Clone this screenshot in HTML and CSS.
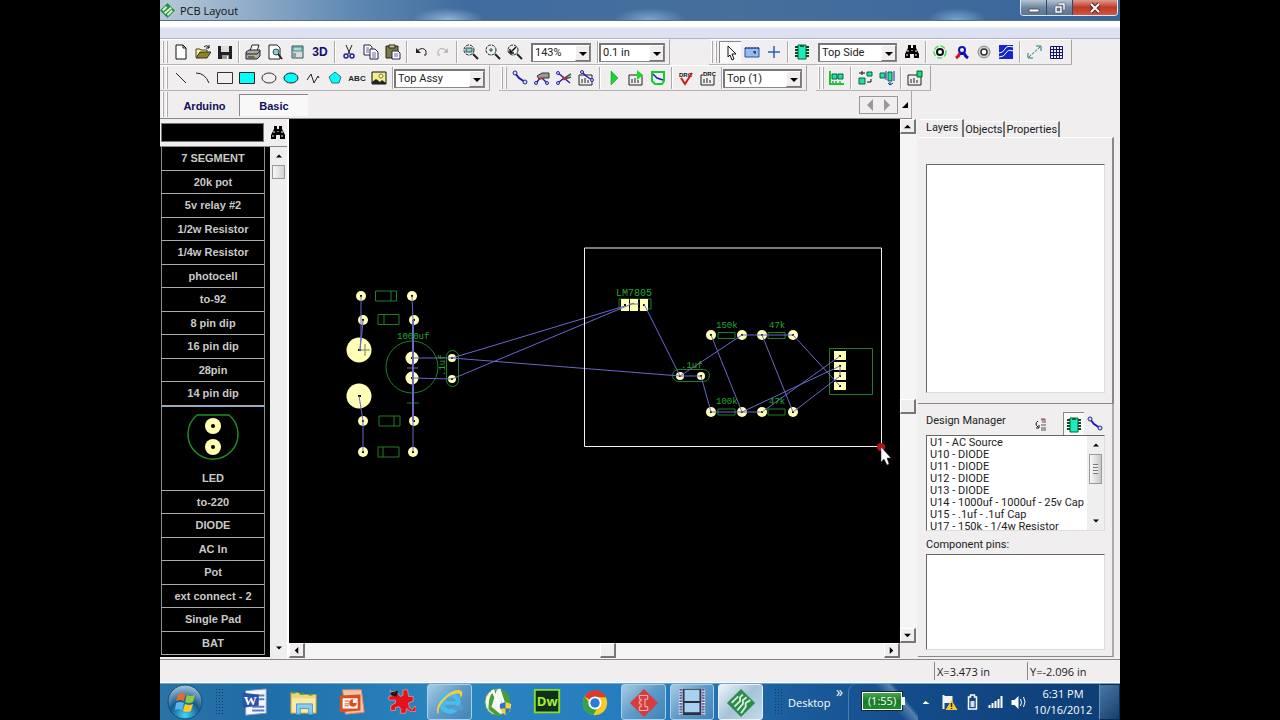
FILE: index.html
```html
<!DOCTYPE html>
<html lang="en">
<head>
  <meta charset="UTF-8">
  <title>PCB Layout</title>
  <meta name="viewport" content="width=device-width, initial-scale=1">
  <link rel="stylesheet" href="styles.css">
</head>
<body>
  <!-- shared shapes -->
  <svg class="defs" width="0" height="0" aria-hidden="true">
    <defs>
      <symbol id="binoculars" viewBox="0 0 16 16"><path d="M4 1h3v3h2V1h3v3l3 6v4h-5v-4H6v4H1v-4l3-6z" fill="#000"/><path d="M4 6v2M12 6v2M3 10v2M12 10v2M8 6v1" stroke="#fff"/></symbol>
      <symbol id="chip" viewBox="0 0 16 16"><path d="M4 1h8v14H4z" fill="#20e8c0" stroke="#063"/><path d="M1 3h3M1 6h3M1 9h3M1 12h3M12 3h3M12 6h3M12 9h3M12 12h3" stroke="#0a4a18" stroke-width="2"/><path d="M6 1h4v2H6z" fill="#063"/></symbol>
      <symbol id="trace" viewBox="0 0 16 16"><path d="M3 3l4 5 6 4" fill="none" stroke="#1a1ab8" stroke-width="2"/><circle cx="3" cy="3" r="2" fill="#dde" stroke="#22a"/><circle cx="13" cy="12" r="2" fill="#dde" stroke="#22a"/></symbol>
      <symbol id="lens" viewBox="0 0 16 16"><circle cx="6" cy="6" r="5" fill="#e8f2f2" stroke="#222" stroke-dasharray="3 1"/><path d="M10 10l5 5" stroke="#222" stroke-width="2"/></symbol>
      <symbol id="report" viewBox="0 0 16 16"><path d="M1 5h13v10H1z" fill="#eee" stroke="#222"/><path d="M4 13V9M7 13V8M10 13v-3" stroke="#888" stroke-width="2"/></symbol>
      <symbol id="down" viewBox="0 0 8 8"><path d="M0 2h8L4 6z" fill="#000"/></symbol>
      <symbol id="up" viewBox="0 0 8 8"><path d="M0 6h8L4 2z" fill="#000"/></symbol>
      <symbol id="left" viewBox="0 0 8 8"><path d="M6 0v8L2 4z" fill="#000"/></symbol>
      <symbol id="right" viewBox="0 0 8 8"><path d="M2 0v8l4-4z" fill="#000"/></symbol>
    </defs>
  </svg>

  <div class="desktop">
    <header class="titlebar">
      <svg class="app-icon" viewBox="0 0 16 16"><path d="M8 0l8 8-8 8-8-8z" fill="#2c9148"/><path d="M3 8l4-4M5 11l7-6M8 13l5-5" stroke="#d5f3da" stroke-width="2"/></svg>
      <span class="title">PCB Layout</span>
      <div class="window-buttons">
        <button class="min" aria-label="Minimize"><svg viewBox="0 0 12 12"><path d="M1 7h10v3H1z" fill="#fff" stroke="#556"/></svg></button>
        <button class="restore" aria-label="Restore"><svg viewBox="0 0 12 12"><path d="M4 1h7v7H9V3H4zM1 4h7v7H1zM3 6v3h3V6z" fill="#fff" fill-rule="evenodd" stroke="#445" stroke-width=".5"/></svg></button>
        <button class="close" aria-label="Close"><svg viewBox="0 0 12 12"><path d="M2 2l8 8M10 2l-8 8" stroke="#522" stroke-width="4"/><path d="M2 2l8 8M10 2l-8 8" stroke="#fff" stroke-width="2"/></svg></button>
      </div>
    </header>
    <div class="menubar"></div>

    <div class="toolbar-row wide">
      <div class="toolbar">
        <span class="grip"></span>
        <button aria-label="New"><svg viewBox="0 0 16 16"><path d="M3 1h7l3 3v11H3z" fill="#fff" stroke="#111"/><path d="M10 1v3h3" fill="none" stroke="#111"/></svg></button>
        <button aria-label="Open"><svg viewBox="0 0 16 16"><path d="M1 13V5h4l1 1h6v3" fill="#f4ee9a" stroke="#442"/><path d="M1 14l4-6h11l-4 6z" fill="#8b8420" stroke="#332"/><path d="M9 3q3-3 5 1M14 1v3h-3" fill="none" stroke="#111"/></svg></button>
        <button aria-label="Save"><svg viewBox="0 0 16 16"><path d="M1 2h14v13H1z" fill="#222"/><path d="M4 2h8v6H4z" fill="#ddd"/><path d="M5 11h7v4H5z" fill="#999"/><path d="M10 12h1v3h-1z" fill="#fff"/></svg></button>
        <span class="sep"></span>
        <button aria-label="Print"><svg viewBox="0 0 16 16"><path d="M5 7l2-6h7l-2 6z" fill="#fff" stroke="#222"/><path d="M1 8l3-2h11v6l-3 3H1z" fill="#aaa" stroke="#222"/><path d="M1 10h11l3-3M3 13h7" fill="none" stroke="#222"/><path d="M9 12h2" stroke="#dd0"/></svg></button>
        <button aria-label="Print preview"><svg viewBox="0 0 16 16"><path d="M2 1h8l3 3v11H2z" fill="#fff" stroke="#222"/><circle cx="9" cy="8" r="3" fill="#8cc" stroke="#355"/><path d="M11 10l4 5" stroke="#222" stroke-width="2"/></svg></button>
        <button aria-label="Calculator"><svg viewBox="0 0 16 16"><path d="M3 2h11v12H3z" fill="#ddd" stroke="#255"/><path d="M4 3h9v4H4z" fill="#a8dadb" stroke="#488"/><path d="M4 10h3M4 12h3" stroke="#366"/></svg></button>
        <button class="three-d">3D</button>
        <span class="sep"></span>
        <button aria-label="Cut"><svg viewBox="0 0 16 16"><path d="M5 1l4 9M11 1l-4 9" stroke="#222"/><circle cx="5" cy="12" r="2" fill="none" stroke="#228" stroke-width="1.5"/><circle cx="11" cy="12" r="2" fill="none" stroke="#228" stroke-width="1.5"/></svg></button>
        <button aria-label="Copy"><svg viewBox="0 0 16 16"><path d="M1 1h6l2 2v8H1z" fill="#fff" stroke="#224"/><path d="M7 5h5l3 3v7H7z" fill="#fff" stroke="#224"/><path d="M3 4h3M3 6h3M3 8h3M9 9h4M9 11h4M9 13h4" stroke="#669"/></svg></button>
        <button aria-label="Paste"><svg viewBox="0 0 16 16"><path d="M1 2h12v12H1z" fill="#7b7b3c" stroke="#222"/><path d="M4 1h6v3H4z" fill="#cc9" stroke="#222"/><path d="M7 7h6l2 2v6H7z" fill="#fff" stroke="#226"/><path d="M9 10h4M9 12h4" stroke="#669"/></svg></button>
        <span class="sep"></span>
        <button aria-label="Undo"><svg viewBox="0 0 16 16"><path d="M3 4v5h5z" fill="#222"/><path d="M4 7q6-5 9 0v4h-2" fill="none" stroke="#222"/></svg></button>
        <button aria-label="Redo" disabled><svg viewBox="0 0 16 16"><path d="M13 4v5H8z" fill="#bbb"/><path d="M12 7Q6 2 3 7v4h2" fill="none" stroke="#aaa"/></svg></button>
        <span class="sep"></span>
        <button aria-label="Zoom window"><svg viewBox="0 0 16 16"><use href="#lens"/><path d="M3 4h6v4H3z" fill="#9cc" stroke="#255"/></svg></button>
        <button aria-label="Zoom in"><svg viewBox="0 0 16 16"><use href="#lens"/><path d="M4 6h4M6 4v4" stroke="#444"/></svg></button>
        <button aria-label="Zoom previous"><svg viewBox="0 0 16 16"><use href="#lens"/><path d="M3 5v4h4M4 8l5-5" fill="none" stroke="#111" stroke-width="1.5"/></svg></button>
        <span class="combo zoom"><select aria-label="Zoom"><option>143%</option></select><i><svg viewBox="0 0 8 8"><use href="#down"/></svg></i></span>
        <span class="sep"></span>
        <span class="combo unit"><select aria-label="Grid"><option>0.1 in</option></select><i><svg viewBox="0 0 8 8"><use href="#down"/></svg></i></span>
      </div>
      <div class="toolbar">
        <span class="grip"></span>
        <button class="pressed" aria-label="Select"><svg viewBox="0 0 16 16"><path d="M5 1l8 8H9l2 5-2 1-2-5-2 2z" fill="#fff" stroke="#111"/></svg></button>
        <button aria-label="Board"><svg viewBox="0 0 16 16"><path d="M1 4h14v9H1z" fill="#91bdf5" stroke="#2c4f9c"/><path d="M1 4h14" stroke="#124" stroke-dasharray="2 1"/><path d="M9 8h3M11 7v3" stroke="#124"/></svg></button>
        <button aria-label="Origin"><svg viewBox="0 0 16 16"><path d="M2 8h12M8 2v12" stroke="#2b5fb8" stroke-width="1.5"/></svg></button>
        <span class="sep"></span>
        <button aria-label="Component"><svg viewBox="0 0 16 16"><use href="#chip"/></svg></button>
        <span class="combo side"><select aria-label="Side"><option>Top Side</option></select><i><svg viewBox="0 0 8 8"><use href="#down"/></svg></i></span>
        <button aria-label="Find"><svg viewBox="0 0 16 16"><use href="#binoculars"/></svg></button>
        <span class="sep"></span>
        <button aria-label="Pad"><svg viewBox="0 0 16 16"><circle cx="8" cy="8" r="6" fill="none" stroke="#4ddc5a" stroke-width="1.5" stroke-dasharray="5 2"/><circle cx="8" cy="8" r="3" fill="#fff" stroke="#111" stroke-width="2"/></svg></button>
        <button aria-label="Route"><svg viewBox="0 0 16 16"><circle cx="8" cy="6" r="3" fill="#eee" stroke="#11b" stroke-width="2"/><path d="M6 9q-1 3-4 5" fill="none" stroke="#d11" stroke-width="3"/><path d="M10 9q1 3 4 5" fill="none" stroke="#11b" stroke-width="3"/><path d="M6 10h5" stroke="#11b" stroke-width="2"/></svg></button>
        <button aria-label="Via"><svg viewBox="0 0 16 16"><circle cx="8" cy="8" r="6" fill="#ccc" stroke="#888"/><circle cx="8" cy="8" r="3" fill="#fff" stroke="#333" stroke-width="1.5"/></svg></button>
        <button aria-label="Copper pour"><svg viewBox="0 0 16 16"><path d="M1 1h14v14H1z" fill="#1425cc"/><path d="M1 9q4 0 6-4t8-2M1 13q5 0 7-4t7-2" fill="none" stroke="#fff"/></svg></button>
        <span class="sep"></span>
        <button aria-label="Measure"><svg viewBox="0 0 16 16"><path d="M3 13L14 3" stroke="#277" stroke-dasharray="3 1"/><path d="M2 9v5h5M10 2h5v5" fill="none" stroke="#277"/></svg></button>
        <button aria-label="Grid"><svg viewBox="0 0 16 16"><path d="M2.500 2.500h12v12h-12zM5.500 2v12M8.500 2v12M11.500 2v12M2 5.500h12M2 8.500h12M2 11.500h12" fill="none" stroke="#15156e"/></svg></button>
      </div>
    </div>

    <div class="toolbar-row">
      <div class="toolbar">
        <span class="grip"></span>
        <button aria-label="Line"><svg viewBox="0 0 16 16"><path d="M3 3l10 10" stroke="#222"/></svg></button>
        <button aria-label="Arc"><svg viewBox="0 0 16 16"><path d="M1 3q9 0 13 10" fill="none" stroke="#222"/></svg></button>
        <button aria-label="Rectangle"><svg viewBox="0 0 16 16"><path d="M.5 2.500h15v11H.5z" fill="none" stroke="#333"/></svg></button>
        <button aria-label="Filled rectangle"><svg viewBox="0 0 16 16"><path d="M.5 2.500h15v11H.5z" fill="#0ff" stroke="#222"/></svg></button>
        <button aria-label="Ellipse"><svg viewBox="0 0 16 16"><ellipse cx="8" cy="8" rx="7" ry="5" fill="none" stroke="#333"/></svg></button>
        <button aria-label="Filled ellipse"><svg viewBox="0 0 16 16"><ellipse cx="8" cy="8" rx="7" ry="5" fill="#0ff" stroke="#222"/></svg></button>
        <button aria-label="Polyline"><svg viewBox="0 0 16 16"><path d="M2 10l4-6 3 9 4-7 1 2" fill="none" stroke="#222"/></svg></button>
        <button aria-label="Polygon"><svg viewBox="0 0 16 16"><path d="M8 2l6 5-2 6H5L2 7z" fill="#0ff" stroke="#377"/></svg></button>
        <button class="abc">ABC</button>
        <button aria-label="Image"><svg viewBox="0 0 16 16"><path d="M1 2h14v12H1z" fill="#f3f08a" stroke="#111"/><path d="M1 14v-2l4-3 4 3 2-2 4 3v1z" fill="#222"/><circle cx="10" cy="6" r="2" fill="#fff" stroke="#772"/></svg></button>
        <span class="sep"></span>
        <span class="combo layer"><select aria-label="Drawing layer"><option>Top Assy</option></select><i><svg viewBox="0 0 8 8"><use href="#down"/></svg></i></span>
      </div>
      <div class="toolbar">
        <span class="grip"></span>
        <button aria-label="Manual route"><svg viewBox="0 0 16 16"><use href="#trace"/></svg></button>
        <button aria-label="Edit trace"><svg viewBox="0 0 16 16"><path d="M2 13l5-6 6 6" fill="none" stroke="#22a" stroke-width="1.5"/><circle cx="2" cy="13" r="1.5" fill="#dde" stroke="#22a"/><circle cx="13" cy="13" r="1.5" fill="#dde" stroke="#22a"/><path d="M3 6l5-3h7v5H9L5 9z" fill="#999" stroke="#333"/><path d="M5 9l3-1" stroke="#d22" stroke-width="2"/></svg></button>
        <button aria-label="Unroute"><svg viewBox="0 0 16 16"><path d="M2 3l5 4 7 6M2 13l6-5" fill="none" stroke="#22a" stroke-width="1.5"/><circle cx="2" cy="3" r="1.5" fill="#dde" stroke="#22a"/><circle cx="2" cy="13" r="1.5" fill="#dde" stroke="#22a"/><path d="M7 9l8-5M9 9l6-2" stroke="#555" stroke-width="1.5"/><path d="M7 7l2 3" stroke="#d22" stroke-width="2"/></svg></button>
        <button aria-label="Route setup"><svg viewBox="0 0 16 16"><use href="#report"/><path d="M4 2l4 4 6 4" fill="none" stroke="#22a" stroke-width="1.5"/><circle cx="4" cy="2" r="1.5" fill="#dde" stroke="#22a"/><circle cx="14" cy="10" r="1.5" fill="#dde" stroke="#22a"/></svg></button>
        <span class="sep"></span>
        <button aria-label="Run autorouter"><svg viewBox="0 0 16 16"><path d="M5 1l7 7-7 7z" fill="#14d62c" stroke="#197a2a" stroke-width=".5"/></svg></button>
        <button aria-label="Autorouter setup"><svg viewBox="0 0 16 16"><use href="#report"/><path d="M9 0l6 5-6 5z" fill="#12dd20"/></svg></button>
        <button aria-label="Route net"><svg viewBox="0 0 16 16"><path d="M2 2h12v9l-2 3H5l-3-3z" fill="#eef" stroke="#18cc28" stroke-width="2"/><path d="M3 4l4 4 6 2" stroke="#22a" stroke-width="1.5" fill="none"/></svg></button>
        <span class="sep"></span>
        <button aria-label="Design rule check"><svg viewBox="0 0 16 16"><text class="tiny" x="1" y="7">DRC</text><path d="M3 8l4 6 7-11" fill="none" stroke="#d01818" stroke-width="2"/></svg></button>
        <button aria-label="Rule setup"><svg viewBox="0 0 16 16"><use href="#report"/><path d="M3 1h13v5H3z" fill="#eee"/><text class="tiny" x="3" y="6">DRC</text></svg></button>
        <span class="sep"></span>
        <span class="combo side"><select aria-label="Routing layer"><option>Top (1)</option></select><i><svg viewBox="0 0 8 8"><use href="#down"/></svg></i></span>
      </div>
      <div class="toolbar">
        <span class="grip"></span>
        <button aria-label="Arrange"><svg viewBox="0 0 16 16"><path d="M1 1v13h14" fill="none" stroke="#1ac82a" stroke-width="2"/><path d="M3 4h5v5H3zM9 4h5v5H9z" fill="#2ddb9d" stroke="#064"/><path d="M4 11v2M7 11v2M11 11v2" stroke="#064"/></svg></button>
        <span class="sep"></span>
        <button aria-label="Auto placement"><svg viewBox="0 0 16 16"><path d="M10 2h5v4h-5zM2 8h6v6H2z" fill="#2ddb9d" stroke="#064"/><path d="M2 3h6M5 1v4M14 9v3h-4" fill="none" stroke="#111"/></svg></button>
        <button aria-label="Update placement"><svg viewBox="0 0 16 16"><path d="M1 3h5v5H1zM9 2h4v9H9z" fill="#2ddb9d" stroke="#064"/><path d="M7 1v9M15 1v10M11 12v3M9 13l2 2 3-2" fill="none" stroke="#22a"/></svg></button>
        <span class="sep"></span>
        <button aria-label="Placement setup"><svg viewBox="0 0 16 16"><use href="#report"/><path d="M10 1h5v6h-5z" fill="#24d778" stroke="#063"/></svg></button>
      </div>
    </div>

    <nav class="library-tabs">
      <span class="grip"></span>
      <button>Arduino</button>
      <button class="active">Basic</button>
      <span class="nav-arrows">
        <button aria-label="Previous" disabled><svg viewBox="0 0 8 12"><path d="M7 0v12L1 6z" fill="#999"/></svg></button>
        <button aria-label="Next" disabled><svg viewBox="0 0 8 12"><path d="M1 0v12l6-6z" fill="#999"/></svg></button>
      </span>
      <svg class="corner" viewBox="0 0 6 6"><path d="M6 0v6H0z" fill="#000"/></svg>
    </nav>

    <main class="workspace">
      <aside class="library">
        <div class="search">
          <input type="text" aria-label="Search components">
          <button aria-label="Find component"><svg viewBox="0 0 16 16"><use href="#binoculars"/></svg></button>
        </div>
        <div class="library-body">
          <div class="parts">
            <button>7 SEGMENT</button>
            <button>20k pot</button>
            <button>5v relay #2</button>
            <button>1/2w Resistor</button>
            <button>1/4w Resistor</button>
            <button>photocell</button>
            <button>to-92</button>
            <button>8 pin dip</button>
            <button>16 pin dip</button>
            <button>28pin</button>
            <button>14 pin dip</button>
            <button class="selected">
              <svg viewBox="0 0 54 50"><path d="M11 3h32A25 25 0 1 1 11 3z" fill="none" stroke="#1c8f22" stroke-width="1.5"/><g fill="#ffffb0"><circle cx="27" cy="14" r="8"/><circle cx="27" cy="35" r="8"/></g><circle cx="27" cy="14" r="2"/><circle cx="27" cy="35" r="2"/></svg>
              LED
            </button>
            <button>to-220</button>
            <button>DIODE</button>
            <button>AC In</button>
            <button>Pot</button>
            <button>ext connect - 2</button>
            <button>Single Pad</button>
            <button>BAT</button>
          </div>
          <div class="slim-scroll">
            <svg viewBox="0 0 8 8"><use href="#up"/></svg>
            <span class="thumb"></span>
            <svg class="end" viewBox="0 0 8 8"><use href="#down"/></svg>
          </div>
        </div>
      </aside>

      <section class="board">
        <div class="board-top">
          <svg class="pcb" viewBox="289 119 611 524" role="img" aria-label="Circuit board">
            <g class="outline">
              <path d="M375.500 291h21v10h-21zM391 291v10M378 314.500h21v10h-21zM384 314.500v10M379 416h21v10h-21zM394 416v10M378 447h21v10h-21zM383 447v10"/>
              <circle cx="412" cy="367" r="26"/>
              <rect x="446.500" y="350.500" width="12" height="36" rx="6"/>
              <path d="M407 403h12M413 398v11M619 299h32v10h-32z"/>
              <rect x="672.500" y="369.500" width="37" height="12" rx="6"/>
              <path d="M718 332.500h17v6h-17zM768 332.500h17v6h-17zM718 409h17v6h-17zM768 409h17v6h-17zM829.500 348.500h43v46h-43z"/>
            </g>
            <g class="pads">
              <circle cx="361" cy="296" r="5"/><circle cx="412" cy="296" r="5"/>
              <circle cx="363" cy="320" r="5"/><circle cx="414" cy="320" r="5"/>
              <circle cx="359" cy="350" r="12.500"/><circle cx="359" cy="396" r="12.500"/>
              <circle cx="412" cy="358" r="6.500"/><circle cx="412" cy="378" r="6.500"/>
              <circle cx="452" cy="358" r="4"/><circle cx="452" cy="379" r="4"/>
              <circle cx="363" cy="421" r="5"/><circle cx="414" cy="421" r="5"/>
              <circle cx="363" cy="452" r="5"/><circle cx="413" cy="452" r="5"/>
              <path d="M621 299h8v12h-8zM630 299h8v12h-8zM640 299h8v12h-8z"/>
              <circle cx="680" cy="376" r="4"/><circle cx="701" cy="376" r="4"/>
              <circle cx="711" cy="335" r="5"/><circle cx="742" cy="335" r="5"/><circle cx="762" cy="335" r="5"/><circle cx="793" cy="335" r="5"/>
              <circle cx="711" cy="412" r="5"/><circle cx="742" cy="412" r="5"/><circle cx="762" cy="412" r="5"/><circle cx="793" cy="412" r="5"/>
              <path d="M834 351h12v9h-12zM834 362h12v8h-12zM834 372h12v8h-12zM834 382h12v8h-12z"/>
            </g>
            <!-- drill holes -->
            <path class="holes" d="M360 296h2M411 296h2M362 320h2M413 320h2M358 350h3M358 396h3M411 358h3M411 378h3M451 358h2M451 379h2M362 421h2M413 421h2M362 452h2M412 452h2M624 305h2M643 305h2M679 376h2M700 376h2M710 335h2M741 335h2M761 335h2M792 335h2M710 412h2M741 412h2M761 412h2M792 412h2M839 356h2M839 366h2M839 376h2M839 386h2"/>
            <path class="marks" d="M359 350h11M365 344v12M407 368h11M629 304h10"/>
            <g class="nets">
              <path d="M361 296v38l-1 16M363 320l-1 12-2 18M412 296l1 24v132M412 358h40M412 378l40 1M452 358l173-52M452 379l182-76M452 358l228 18M359 396l4 25v31"/>
              <path d="M644 304l36 72 62-41M680 376h21l10 36h51M742 335h51l47 51M711 335l31 77 98-46M762 335l31 77 47-36v-10M762 412l78-56"/>
              <path class="thick" d="M413 320v101"/>
            </g>
            <g class="labels">
              <text x="397" y="339">1000uf</text>
              <text x="445" y="376" transform="rotate(-90 445 376)">.1uf</text>
              <text class="big" x="616" y="296">LM7805</text>
              <text x="716" y="328">150k</text>
              <text x="769" y="328">47k</text>
              <text x="681" y="368">.1uf</text>
              <text x="716" y="404">100k</text>
              <text x="769" y="404">47k</text>
            </g>
            <path class="board-edge" d="M584.500 248h297v198.500h-297z"/>
            <circle cx="881" cy="447" r="4" fill="#b3141c"/>
            <path d="M881 447v15l3-3 3 6 2-1-2-6h4z" fill="#fff" stroke="#333" stroke-width=".5"/>
          </svg>
          <div class="scroll vertical">
            <span class="box"><svg viewBox="0 0 8 8"><use href="#up"/></svg></span>
            <span class="box middle"></span>
            <span class="box"><svg viewBox="0 0 8 8"><use href="#down"/></svg></span>
          </div>
        </div>
        <div class="scroll horizontal">
          <span class="box"><svg viewBox="0 0 8 8"><use href="#left"/></svg></span>
          <span class="box middle"></span>
          <span class="box"><svg viewBox="0 0 8 8"><use href="#right"/></svg></span>
        </div>
      </section>

      <aside class="inspector">
        <div class="tabs">
          <button class="active">Layers</button>
          <button>Objects</button>
          <button>Properties</button>
        </div>
        <div class="layers"><div class="well"></div></div>
        <div class="manager">
          <div class="manager-head">
            <span>Design Manager</span>
            <button aria-label="Sort"><svg viewBox="0 0 16 16"><path d="M8 3h4M9 6h4M8 9h5M8 12h5M8 14h5" stroke="#555"/><path d="M5 5q-4 3 0 6M3 12h3V9" fill="none" stroke="#111"/><path d="M8 4h5" stroke="#b33"/></svg></button>
            <button class="pressed" aria-label="Components"><svg viewBox="0 0 16 16"><use href="#chip"/></svg></button>
            <button aria-label="Nets"><svg viewBox="0 0 16 16"><use href="#trace"/></svg></button>
          </div>
          <div class="component-box">
            <ul>
              <li>U1 - AC Source</li>
              <li>U10 - DIODE</li>
              <li>U11 - DIODE</li>
              <li>U12 - DIODE</li>
              <li>U13 - DIODE</li>
              <li>U14 - 1000uf - 1000uf - 25v Cap</li>
              <li>U15 - .1uf - .1uf Cap</li>
              <li>U17 - 150k - 1/4w Resistor</li>
            </ul>
            <div class="slim-scroll">
              <svg viewBox="0 0 8 8"><use href="#up"/></svg>
              <span class="thumb tall"></span>
              <svg class="end" viewBox="0 0 8 8"><use href="#down"/></svg>
            </div>
          </div>
          <div class="pins-label">Component pins:</div>
          <div class="well pins"></div>
        </div>
      </aside>
    </main>

    <footer class="status">
      <span>X=3.473 in</span>
      <span>Y=-2.096 in</span>
    </footer>

    <div class="taskbar">
      <button class="start" aria-label="Start">
        <svg viewBox="0 0 36 36">
          <defs><radialGradient id="orb" cx=".5" cy=".9" r=".9"><stop offset="0" stop-color="#46d3f4"/><stop offset=".5" stop-color="#155a92"/><stop offset="1" stop-color="#a9c9dc"/></radialGradient></defs>
          <circle cx="18" cy="18" r="17" fill="url(#orb)" stroke="#174b6e"/>
          <path d="M11 11q4-3 7-1l-1 7q-4-2-8 0z" fill="#ee6a24"/><path d="M20 11q3 2 8 0l-2 7q-4 2-8 0z" fill="#8fca3c"/><path d="M9 19q4-2 8 0l-2 7q-3-2-7 0z" fill="#58b7ee"/><path d="M18 20q4 2 8 0l-2 7q-4 2-8 0z" fill="#fcc928"/>
        </svg>
      </button>
      <span class="dots"></span>
      <div class="tasks">
        <button aria-label="Word"><svg viewBox="0 0 32 32"><path d="M6 4l22-2v26l-22 2z" fill="#f4f7fc" stroke="#7a95c5"/><path d="M18 9h8M18 13h8M13 21h13M13 25h13" stroke="#5d7fc0" stroke-width="2"/><path d="M3 6l17 2v12l-17 2z" fill="#2a53a6"/><text class="logo" x="4" y="19">W</text></svg></button>
        <button aria-label="Explorer"><svg viewBox="0 0 32 32"><path d="M2 6h8l2 2h17v20H2z" fill="#ecd67c" stroke="#b99b3e"/><path d="M3 12h25v15H3z" fill="#f8e9a6"/><path d="M3 6h4M12 7h4M21 8h4" stroke="#3a9b4a" stroke-width="2"/><path d="M8 29V18h17v11h-4v-6h-9v6z" fill="#8ccbea" stroke="#4a9bc8"/></svg></button>
        <button aria-label="PowerPoint"><svg viewBox="0 0 32 32"><path d="M6 3h20l3 24-20 2z" fill="#f6c2a6" stroke="#d98a68"/><path d="M3 9l22-1v17l-22 2z" fill="#d9501e"/><path d="M6 12h16v11H6z" fill="#fff"/><path d="M8 15h5M8 18h5M8 20h5" stroke="#d9501e"/><circle cx="17" cy="17" r="4" fill="#d9501e"/><path d="M17 17v-4a4 4 0 0 1 4 4z" fill="#fff"/></svg></button>
        <button aria-label="IrfanView"><svg viewBox="0 0 32 32"><path d="M4 4l8 2 3 4 3-1V3h5l1 7h5v5l-5 2 1 5 3 2 2-3h2v5h-6l-4-3-1 5h-6l1-4-2-3-4 1v3H5v-5l5-3V14H3v-4l5-1z" fill="#e3131b" stroke="#f3a9ac" stroke-width=".7"/><path d="M5 6l8-2-2 6-5-1z" fill="#111"/><path d="M8 7l2-1" stroke="#e3131b"/></svg></button>
        <button class="open" aria-label="Internet Explorer"><svg viewBox="0 0 32 32"><circle cx="17" cy="17" r="9" fill="none" stroke="#45bdf0" stroke-width="5"/><path d="M11 17h15" stroke="#45bdf0" stroke-width="4"/><path d="M21 20h10v5h-10z" fill="#5f9ac6"/><path d="M4 29Q0 21 11 11T29 4q3 3-1 8 1-6-4-5-6 0-13 7T5 28z" fill="#f5cf3a"/></svg></button>
        <button aria-label="CorelDRAW"><svg viewBox="0 0 32 32"><ellipse cx="15" cy="16" rx="13" ry="14" fill="#f2f7ee" stroke="#598f45"/><path d="M15 2q-10 4-9 22 8 8 14 6L9 21zM17 2q12 2 12 16l-9-1z" fill="#4a9e36"/><path d="M10 3l8 17M17 2l5 15" stroke="#fff" stroke-width="3"/><path d="M18 18l6-2 6 2q0 9-6 12-6-3-6-12z" fill="#f4cf43"/><path d="M18 18l6-2v7h-6zM24 23h5q-1 5-5 7z" fill="#2a73c8"/></svg></button>
        <button aria-label="Dreamweaver"><svg viewBox="0 0 32 32"><path d="M3 3h26v24H3z" fill="#10301a" stroke="#8be01c" stroke-width="2"/><text class="dw" x="5" y="20">Dw</text></svg></button>
        <button aria-label="Chrome"><svg viewBox="0 0 32 32"><circle cx="16" cy="17" r="13" fill="#f5c927"/><path d="M16 17L5 10a13 13 0 0 1 23 1H16z" fill="#dc3a2c"/><path d="M5 10a13 13 0 0 0 9 20l6-10-9-1z" fill="#38a048"/><circle cx="16" cy="17" r="7" fill="#fff"/><circle cx="16" cy="17" r="5" fill="#2a7be0"/></svg></button>
        <button class="open" aria-label="ExpressSCH"><svg viewBox="0 0 32 32"><path d="M16 2l15 15-15 15L1 17z" fill="#d63c3c"/><path d="M11 9h9v4h-3v8h3v4h-9v-4h2v-3h-2v-3h2v-2h-2z" fill="none" stroke="#f7c4c4"/></svg></button>
        <button class="open" aria-label="Video editor"><svg viewBox="0 0 32 32"><path d="M2 2h28v28H2z" fill="#f2f2fa"/><path d="M6 2h20v28H6z" fill="#29303f"/><path d="M8 3h16v12H8zM8 17h16v10H8z" fill="#a9d0ee"/><path d="M4 2v28M28 2v28" stroke="#6058a8" stroke-width="3" stroke-dasharray="2 1"/></svg></button>
        <button class="open current" aria-label="ExpressPCB"><svg viewBox="0 0 32 32"><path d="M16 2l15 15-15 15L1 17z" fill="#2c8a4d"/><path d="M6 17l7-7M9 21l6-6v-4l3-3M12 25l6-7v-4l4-3M16 28l5-7v-4l5-3" fill="none" stroke="#d6efd8" stroke-width="2"/></svg></button>
      </div>
      <span class="dots"></span>
      <a class="desk" href="#">Desktop</a>
      <span class="more">»</span>
      <div class="battery"><span>(1:55)</span></div>
      <div class="tray">
        <svg viewBox="0 0 16 16"><path d="M4 10h7L7 7z" fill="#fff"/></svg>
        <svg viewBox="0 0 16 16"><path d="M1 1h2v14H1zM3 2h8v7H3z" fill="#f4f4f4"/><path d="M10 6l6 10H4z" fill="#f8c922"/><path d="M10 9v4M10 14v1" stroke="#222" stroke-width="1.5"/></svg>
        <svg viewBox="0 0 16 16"><path d="M6 1h4v2h2v12H4V3h2z" fill="none" stroke="#fff" stroke-width="1.5"/><path d="M6 7h4v6H6z" fill="#ddd"/></svg>
        <svg viewBox="0 0 16 16"><path d="M2 14v-3M5 14v-5M8 14V7M11 14V5M14 14V2" stroke="#fff" stroke-width="2"/></svg>
        <svg viewBox="0 0 16 16"><path d="M1 6h3l4-4v13l-4-4H1z" fill="#fff"/><path d="M10 5q2 3 0 7M13 3q3 5 0 10" fill="none" stroke="#fff"/></svg>
      </div>
      <div class="clock">6:31 PM<br>10/16/2012</div>
      <button class="show-desktop" aria-label="Show desktop"></button>
    </div>
  </div>
</body>
</html>
```
FILE: styles.css
```css
* {
  box-sizing: border-box;
}
body {
  margin: 0;
  background: #000;
  font-family: Roboto, "Liberation Sans", sans-serif;
  font-size: 11px;
  color: #222;
}
button, select, input {
  font: inherit;
  color: inherit;
  border: none;
  margin: 0;
  padding: 0;
  background: none;
  border-radius: 0;
}
svg {
  display: block;
}
.defs {
  position: absolute;
}
.desktop {
  display: flex;
  flex-direction: column;
  width: 75%;
  min-height: 100vh;
  margin: 0 auto;
  background: #f0eeef;
}

/* title bar */
.titlebar {
  display: flex;
  align-items: center;
  height: 20px;
  padding-right: 2px;
  font-family: "Open Sans", sans-serif;
  color: #111;
  background:
    radial-gradient(ellipse 36px 12px at 30% 100%, #8fb4d8, transparent),
    radial-gradient(ellipse 36px 12px at 51% 100%, #7aa8d0, transparent),
    radial-gradient(ellipse 30px 12px at 83% 100%, #76a5d0, transparent),
    linear-gradient(to right, #b6c8d8, #8daac7 10%, #5f88b2 20%, #3f6c9e 32%, #476f9c 60%, #37659a);
}
.app-icon {
  width: 15px;
  height: 15px;
}
.title {
  margin-left: 5px;
}
.window-buttons {
  display: flex;
  align-self: flex-start;
  height: 16px;
  margin-left: auto;
  border: 1px solid #dbe6f0;
  border-top: none;
  border-radius: 0 0 4px 4px;
  overflow: hidden;
}
.window-buttons button {
  width: 26px;
  background: linear-gradient(#b5c4d4, #6f87a0 50%, #5b7591);
  border-right: 1px solid #34495f;
}
.window-buttons .close {
  width: 44px;
  border: none;
  background: linear-gradient(#dd9b8c, #bf3a26 50%, #d0553c);
}
.window-buttons svg {
  width: 12px;
  height: 12px;
  margin: 0 auto;
}
.menubar {
  height: 19px;
  border-top: 1px solid #58718c;
  border-bottom: 1px solid #b2b5c4;
  background: linear-gradient(#fff, #fff 30%, #dfe2f2 45%, #dce0f0);
}

/* toolbars */
.toolbar-row {
  display: flex;
  gap: 9px;
  height: 26px;
}
.toolbar-row.wide {
  gap: 39px;
}
.toolbar {
  display: flex;
  align-items: center;
  padding-right: 4px;
  border-right: 1px solid #a5a3a4;
  border-bottom: 1px solid #b5b3b4;
  border-top: 1px solid #fff;
}
.grip {
  align-self: stretch;
  width: 6px;
  margin: 1px 2px;
  background: linear-gradient(to right, #fff 1px, #aaa 1px 2px, transparent 2px 4px, #fff 4px 5px, #aaa 5px);
}
.sep {
  align-self: stretch;
  width: 6px;
  margin: 1px 0;
  background: linear-gradient(to right, transparent 2px, #aaa 2px 3px, #fff 3px 4px, transparent 4px);
}
.toolbar > button {
  width: 22px;
  height: 22px;
}
.toolbar button svg,
.manager-head svg,
.search svg {
  width: 16px;
  height: 16px;
  margin: 0 auto;
}
.toolbar > .three-d {
  width: 24px;
  font: bold 12px "Liberation Sans", sans-serif;
  color: #10106e;
}
.toolbar > .abc {
  font: bold 8px "Liberation Sans", sans-serif;
}
.tiny {
  font: bold 6px "Liberation Sans", sans-serif;
  fill: #111;
}
.pressed {
  background: #faf9fa;
  border-top: 1px solid #888;
  border-left: 1px solid #888;
}
.combo {
  display: flex;
  position: relative;
  height: 19px;
  margin: 0 4px 0 5px;
  border: 1px solid #888;
  border-top: 2px solid #777;
  border-left: 2px solid #777;
  background: #fff;
}
.toolbar .combo:last-child {
  margin-right: 0;
}
.sep + .combo {
  margin-left: -2px;
}
.combo select {
  width: 100%;
  padding-left: 2px;
  appearance: none;
}
.combo i {
  position: absolute;
  top: 0;
  right: 0;
  bottom: 0;
  width: 15px;
  padding: 4px 3px;
  background: #f0eeef;
  border: 1px solid #fff;
  border-right-color: #777;
  border-bottom-color: #777;
  pointer-events: none;
}
.combo i svg {
  width: 8px;
  height: 8px;
}
.combo.zoom {
  width: 60px;
}
.combo.unit {
  width: 66px;
}
.combo.side {
  width: 79px;
}
.combo.layer {
  width: 91px;
}

/* library tabs */
.library-tabs {
  display: flex;
  align-items: center;
  height: 28px;
  margin-right: 208px;
  border-right: 1px solid #aaa;
  border-bottom: 1px solid #888;
  font: bold 11px "Liberation Sans", sans-serif;
  color: #10105a;
}
.library-tabs > button {
  width: 69px;
  height: 22px;
  padding-top: 2px;
}
.library-tabs > button.active {
  background: #f9f8f9;
  border-top: 1px solid #888;
  border-left: 1px solid #888;
}
.nav-arrows {
  display: flex;
  margin-left: auto;
  padding: 2px 3px;
  gap: 3px;
  border: 1px solid #999;
}
.nav-arrows button {
  width: 14px;
}
.nav-arrows svg {
  width: 8px;
  height: 12px;
  margin: 0 auto;
}
.corner {
  width: 6px;
  height: 6px;
  margin: 0 3px 0 4px;
}

/* workspace */
.workspace {
  display: flex;
  flex: 1;
  min-height: 540px;
}
.library {
  display: flex;
  flex-direction: column;
  width: 129px;
  border-right: 2px solid #fff;
}
.search {
  display: flex;
  align-items: center;
  height: 27px;
  padding-left: 1px;
}
.search input {
  width: 103px;
  height: 19px;
  margin-right: 6px;
  padding: 0 4px;
  color: #fff;
  background: #000;
  border: 1px solid #777;
}
.library-body {
  display: flex;
  flex: 1;
  margin-bottom: 2px;
  border-top: 1px solid #888;
}
.parts {
  display: flex;
  flex-direction: column;
  width: 110px;
  padding: 0 5px 2px 1px;
  background: #000;
}
.parts button {
  flex: 1;
  font: bold 11px "Liberation Sans", sans-serif;
  color: #cbc9c6;
  border: 1px solid #8f8f8f;
  border-top: none;
  border-bottom-color: #aaa;
}
.parts button.selected {
  flex: 0 0 85px;
  border-top: 1px solid #86a9d8;
}
.parts svg {
  width: 54px;
  height: 50px;
  margin: 0 auto 10px;
}
.slim-scroll {
  display: flex;
  flex-direction: column;
  align-items: center;
  width: 17px;
  padding: 5px 0;
  background: #f0eff0;
}
.slim-scroll svg {
  width: 6px;
  height: 8px;
}
.slim-scroll .end {
  margin-top: auto;
}
.thumb {
  width: 13px;
  height: 14px;
  margin-top: 5px;
  background: linear-gradient(to right, #f8f8f8, #d2d2d4);
  border: 1px solid #999;
}
.thumb.tall {
  height: 30px;
  padding: 9px 3px;
  background: repeating-linear-gradient(#777 0 1px, #eee 1px 3px) content-box, linear-gradient(to right, #f8f8f8, #c8c8ca);
}

.board {
  display: flex;
  flex-direction: column;
  flex: 1;
  min-width: 0;
}
.board-top {
  display: flex;
  flex: 1;
}
.pcb {
  flex: 1;
  min-width: 0;
  height: auto;
  background: #000;
}
.outline {
  fill: none;
  stroke: #1d7f2c;
}
.pads {
  fill: #ffffb8;
}
.holes {
  stroke: #111;
  stroke-width: 2;
}
.marks {
  stroke: #7c7c6c;
}
.nets {
  fill: none;
  stroke: #6868c8;
}
.nets .thick {
  stroke-width: 2;
}
.labels {
  font: 9px "Liberation Mono", monospace;
  fill: #24a834;
}
.labels .big {
  font-size: 10px;
}
.board-edge {
  fill: none;
  stroke: #f2f2f2;
}
.scroll {
  display: flex;
  justify-content: space-between;
  background: #f6f5f6;
}
.scroll.vertical {
  flex-direction: column;
  width: 17px;
}
.scroll.vertical .middle {
  margin-top: 50px;
}
.scroll.horizontal {
  height: 16px;
  margin-right: 17px;
}
.scroll.horizontal .middle {
  margin-left: 26px;
}
.box {
  display: flex;
  align-items: center;
  justify-content: center;
  width: 16px;
  height: 15px;
  background: #f0eeef;
  border: 1px solid #fff;
  border-right: 2px solid #777;
  border-bottom: 2px solid #777;
}
.box svg {
  width: 7px;
  height: 7px;
}

/* right side */
.inspector {
  display: flex;
  flex-direction: column;
  width: 203px;
  padding: 0 6px 0 1px;
}
.tabs {
  display: flex;
  align-items: flex-end;
  height: 18px;
  padding-left: 2px;
}
.tabs button {
  height: 16px;
  padding: 0 1px;
  border-top: 1px solid #fff;
  border-right: 2px solid #777;
}
.tabs .active {
  height: 18px;
  padding: 0 4px 3px 6px;
}
.layers {
  display: flex;
  flex: 1 1 267px;
  padding: 26px 7px 10px 8px;
  border-top: 1px solid #fff;
  border-right: 2px solid #888;
  border-bottom: 1px solid #888;
}
.well {
  flex: 1;
  background: #fff;
  border: 1px solid #ddd;
  border-top-color: #666;
  border-left-color: #666;
}
.manager {
  display: flex;
  flex-direction: column;
  flex: 1 1 253px;
  margin-bottom: 2px;
  padding: 8px 7px 6px 8px;
  border-right: 2px solid #aaa;
  border-bottom: 1px solid #888;
}
.manager-head {
  display: flex;
  height: 23px;
}
.manager-head span {
  flex: 1;
  padding-top: 2px;
}
.manager-head button {
  width: 21px;
  padding-top: 1px;
}
.manager-head .pressed {
  margin-left: 12px;
}
.component-box {
  display: flex;
  height: 96px;
  background: #fff;
  border: 1px solid #ddd;
  border-top-color: #666;
  border-left-color: #666;
}
.component-box ul {
  flex: 1;
  height: 94px;
  margin: 0;
  padding: 1px 3px 0;
  overflow: hidden;
  list-style: none;
  line-height: 12px;
  white-space: nowrap;
}
.pins-label {
  padding: 7px 0 3px;
}

.status {
  display: flex;
  justify-content: flex-end;
  height: 24px;
  border-top: 1px solid #888;
  border-bottom: 1px solid #fff;
  font: 11px "Open Sans", sans-serif;
}
.status span {
  width: 93px;
  margin: 2px 0;
  padding: 2px;
  border-left: 1px solid #888;
}

/* taskbar */
.taskbar {
  display: flex;
  align-items: center;
  height: 37px;
  font: 11px "Open Sans", sans-serif;
  color: #fff;
  background: linear-gradient(to right, #2a73a6, #1f6da6 10%, #2b86c0 30%, #2479bd 55%, #1b5c9c 66%, #134a88 80%, #0d3d74);
  border-top: 1px solid #6fa5cc;
}
.start {
  width: 36px;
  margin-left: 7px;
}
.start svg {
  width: 36px;
  height: 36px;
}
.dots {
  width: 8px;
  height: 28px;
  margin: 0 8px 0 12px;
  background: radial-gradient(#0e3f68 1px, transparent 1px) 0 0 / 3px 3px;
}
.tasks + .dots {
  margin: 0 6px 0 9px;
}
.tasks {
  display: grid;
  grid-template-columns: repeat(11, 1fr);
  flex: 1;
  height: 36px;
}
.tasks button {
  margin: 0 2px;
  border: 1px solid transparent;
  border-radius: 3px;
}
.tasks .open {
  border-color: #a8d0ea;
  background: linear-gradient(135deg, #a8cce4, #5c9ac8 50%, #4284b8);
}
.tasks .current {
  border-color: #eef;
  background: linear-gradient(135deg, #eef4f8, #a5c3d8 50%, #c3dae8);
}
.tasks svg {
  width: 30px;
  height: 30px;
  margin: 0 auto;
}
.logo {
  font: bold 14px "Liberation Serif", serif;
  fill: #fff;
}
.dw {
  font: bold 14px "Open Sans", sans-serif;
  fill: #a5ef36;
}
.desk {
  width: 48px;
  color: #fff;
  text-decoration: none;
}
.more {
  align-self: flex-start;
  width: 12px;
  font-size: 14px;
  line-height: 16px;
}
.battery {
  align-self: stretch;
  width: 70px;
  padding: 8px 13px;
  border-left: 1px solid #4a80ac;
  border-radius: 8px 0 0;
  background: linear-gradient(50deg, transparent 55%, #5482ac 70%, transparent 75%);
}
.battery span {
  position: relative;
  display: block;
  width: 40px;
  line-height: 16px;
  text-align: center;
  background: linear-gradient(#4aa64f, #177b25 50%, #1d8b2c);
  border: 1px solid #fff;
  outline: 1px solid #222;
}
.battery span::after {
  content: "";
  position: absolute;
  top: 4px;
  right: -4px;
  width: 3px;
  height: 8px;
  background: #fff;
}
.tray {
  display: flex;
  gap: 6px;
}
.tray svg {
  width: 17px;
  height: 16px;
}
.clock {
  width: 72px;
  line-height: 16px;
  text-align: center;
}
.show-desktop {
  align-self: stretch;
  width: 21px;
  border: 1px solid #0a2c55;
  border-left-color: #6a90b8;
  background: linear-gradient(135deg, #4a77a5, #163f70);
}
```
